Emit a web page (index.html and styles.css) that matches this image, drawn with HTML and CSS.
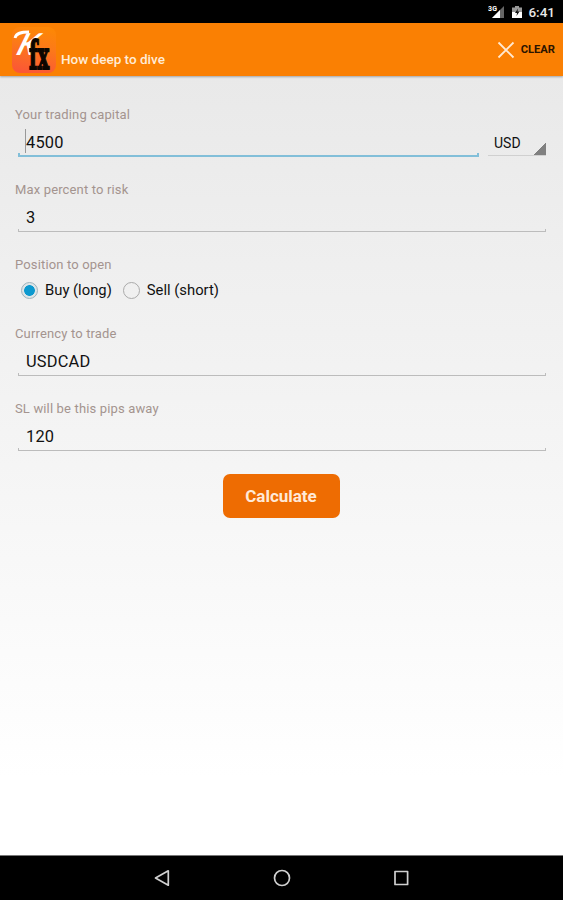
FILE: index.html
```html
<!DOCTYPE html>
<html lang="en">
<head>
  <meta charset="UTF-8" />
  <title>How deep to dive</title>
  <link rel="stylesheet" href="styles.css">
</head>
<body>
  <div class="status-bar">
    <svg class="signal" width="17" height="14" viewBox="0 0 17 14">
      <text class="network" x="0" y="6" textLength="9">3G</text>
      <path d="M4 13 L16 1 V13 Z" fill="#666" />
      <path d="M4 13 L12 5 V13 Z" fill="#fff" />
    </svg>
    <svg class="battery" width="10" height="14" viewBox="0 0 10 14">
      <path d="M3 1 H7 V2.5 H10 V13 H0 V2.5 H3 Z" fill="#999" />
      <path d="M0 7 H10 V13 H0 Z" fill="#fff" />
      <path d="M6 3.5 L3 8 H5 L4.5 11 L7.5 6.5 H5.5 Z" fill="#111" />
    </svg>
    <span class="clock">6:41</span>
  </div>

  <header class="app-bar">
    <svg class="logo" width="44" height="46" viewBox="0 0 44 46">
      <defs>
        <linearGradient id="logo-bg" x1="0.6" y1="0" x2="0.4" y2="1">
          <stop offset="0" stop-color="#fd8705" />
          <stop offset="0.4" stop-color="#fc7a18" />
          <stop offset="1" stop-color="#fb5736" />
        </linearGradient>
      </defs>
      <rect width="44" height="46" rx="8" fill="url(#logo-bg)" />
      <path d="M3 11 C4 6 9 5 17 5" fill="none" stroke="#fff" stroke-width="2.8" />
      <text class="logo-k" transform="translate(3 28) skewX(-20)">K</text>
      <text class="logo-text" x="17" y="42" textLength="20" lengthAdjust="spacingAndGlyphs">fx</text>
    </svg>
    <h1>How deep to dive</h1>
    <button class="clear" type="reset" form="risk-form">
      <svg width="18" height="18" viewBox="0 0 18 18">
        <path d="M1.5 1.5 L16.5 16.5 M16.5 1.5 L1.5 16.5" stroke="#ffe9d2" stroke-width="1.8" />
      </svg>
      <span>CLEAR</span>
    </button>
  </header>

  <form class="content" id="risk-form">
    <div class="field">
      <label for="capital">Your trading capital</label>
      <div class="row">
        <div class="input-box active">
          <span class="caret"></span>
          <input type="text" id="capital" value="4500" />
        </div>
        <div class="spinner">USD</div>
      </div>
    </div>
    <div class="field">
      <label for="risk">Max percent to risk</label>
      <div class="input-box"><input type="text" id="risk" value="3" /></div>
    </div>
    <div class="field position">
      <label>Position to open</label>
      <div class="radios">
        <label class="radio"><input type="radio" name="position" checked /><span>Buy (long)</span></label>
        <label class="radio"><input type="radio" name="position" /><span>Sell (short)</span></label>
      </div>
    </div>
    <div class="field">
      <label for="pair">Currency to trade</label>
      <div class="input-box"><input type="text" id="pair" value="USDCAD" /></div>
    </div>
    <div class="field">
      <label for="pips">SL will be this pips away</label>
      <div class="input-box"><input type="text" id="pips" value="120" /></div>
    </div>
    <button class="calculate" type="button">Calculate</button>
  </form>

  <nav class="nav-bar">
    <svg width="18" height="18" viewBox="0 0 18 18"><path d="M2.5 9 L15.3 1.8 V16.2 Z" /></svg>
    <svg width="18" height="18" viewBox="0 0 18 18"><circle cx="9" cy="9" r="7.5" /></svg>
    <svg width="18" height="18" viewBox="0 0 18 18"><rect x="2" y="2.5" width="12.6" height="13" /></svg>
  </nav>
</body>
</html>
```
FILE: styles.css
```css
* {
  box-sizing: border-box;
}
body {
  margin: 0;
  height: 900px;
  display: flex;
  flex-direction: column;
  font-family: Roboto, "Noto Sans", sans-serif;
  color: #111;
  background: #fff;
  overflow: hidden;
}
.status-bar {
  height: 23px;
  flex: none;
  background: #000;
  color: #e8e8e8;
  display: flex;
  justify-content: flex-end;
  align-items: center;
  padding: 1px 8px 0 0;
}
.battery {
  margin: 0 6px 0 7px;
}
.network {
  font-size: 7px;
  font-weight: 700;
  fill: #fff;
}
.clock {
  font-size: 13.5px;
  font-weight: 500;
}
.app-bar {
  height: 53px;
  flex: none;
  display: flex;
  align-items: center;
  padding: 0 8px 0 12px;
  background: #fa8003;
  box-shadow: 0 1px 2px rgba(0, 0, 0, 0.3);
  z-index: 1;
}
.logo {
  overflow: visible;
}
.logo-k {
  font-family: Lato, sans-serif;
  font-size: 30px;
  font-style: italic;
  font-weight: 700;
  fill: #fff;
}
.logo-text {
  font-family: "DejaVu Serif", serif;
  font-size: 39px;
  font-weight: 700;
  fill: #0c0500;
  stroke: #0c0500;
  stroke-width: 1.8;
}
h1 {
  margin: 18px auto 0 5px;
  font-size: 13.5px;
  font-weight: 500;
  color: #ffecd8;
}
button {
  border: none;
  font-family: inherit;
}
.clear {
  display: flex;
  align-items: center;
  gap: 6px;
  padding: 0;
  background: none;
  color: #2b1400;
  font-size: 11.2px;
  font-weight: 700;
}
.content {
  flex: 1;
  display: flex;
  flex-direction: column;
  gap: 23px;
  padding: 30px 17px 0 15px;
  background: linear-gradient(#e9e9e9, #eee 20%, #f5f5f5 50%, #fff 90%);
}
.field > label {
  display: block;
  height: 18px;
  line-height: 18px;
  font-size: 13px;
  letter-spacing: 0.15px;
  color: #a4948f;
}
.row {
  display: flex;
  gap: 9px;
}
.input-box {
  --line: #bcbcbc;
  flex: 1;
  height: 34px;
  margin-left: 3px;
  padding-left: 8px;
  display: flex;
  align-items: center;
  border-bottom: 1px solid transparent;
  background:
    linear-gradient(var(--line), var(--line)) 0 100% / 100% 1px no-repeat,
    linear-gradient(var(--line), var(--line)) 0 100% / 1px 3px no-repeat,
    linear-gradient(var(--line), var(--line)) 100% 100% / 1px 3px no-repeat;
}
.input-box.active {
  --line: #82bfd9;
  position: relative;
  background-size: 100% 2px, 2px 4px, 2px 4px;
}
.caret {
  position: absolute;
  left: 7px;
  top: 5px;
  width: 1px;
  height: 24px;
  background: #999;
}
.input-box input {
  width: 100%;
  padding: 4px 0 0;
  border: none;
  outline: none;
  background: none;
  font-family: inherit;
  font-size: 16.4px;
  letter-spacing: 0.2px;
  color: #111;
}
.spinner {
  width: 58px;
  height: 32px;
  padding-left: 6px;
  line-height: 38px;
  font-size: 14px;
  border-bottom: 1px solid #d0d0d0;
  background: linear-gradient(135deg, transparent 50%, #808080 50%) 100% 100% / 12px 12px no-repeat;
}
.radios {
  display: flex;
  align-items: center;
  gap: 11px;
  height: 32px;
  padding-left: 6px;
}
.position {
  margin-bottom: -4px;
}
.radio {
  display: flex;
  align-items: center;
  gap: 7px;
  font-size: 14.8px;
}
.radio input {
  appearance: none;
  width: 17px;
  height: 17px;
  margin: 0;
  border: 1px solid #aaa;
  border-radius: 50%;
}
.radio input:checked {
  border-color: #9fb2ba;
  background: radial-gradient(circle, #0c99cf 5px, #dce5e8 5.7px);
}
.calculate {
  align-self: center;
  width: 117px;
  height: 44px;
  margin: -1px 0 0 1px;
  border-radius: 7px;
  background: #ee6c02;
  color: #ffe9d8;
  font-size: 17px;
  font-weight: 700;
}
.nav-bar {
  height: 45px;
  flex: none;
  display: flex;
  justify-content: center;
  align-items: center;
  gap: 102px;
  background: #000;
  border-top: 1px solid #777;
}
.nav-bar svg {
  fill: none;
  stroke: #d0d0d0;
  stroke-width: 1.7;
  stroke-linejoin: round;
}
```
